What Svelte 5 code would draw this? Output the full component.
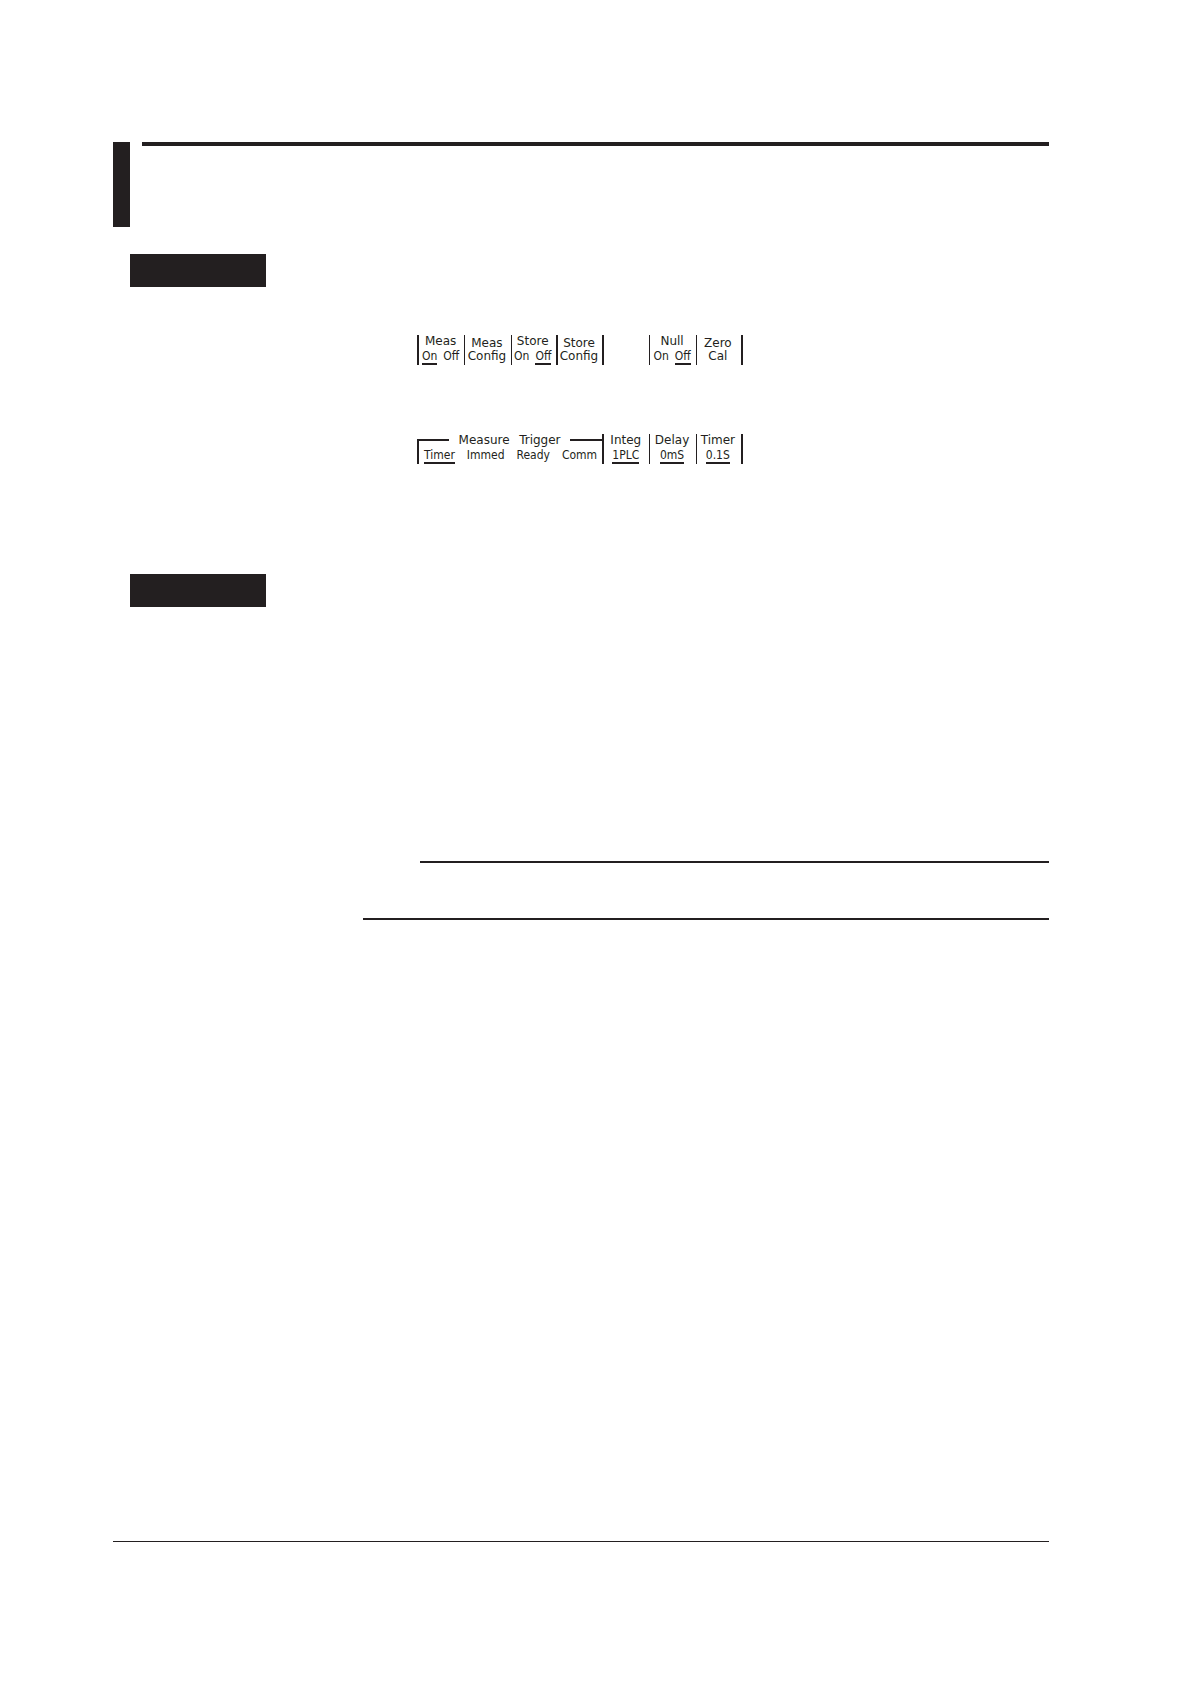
<script lang="ts">
  interface SoftKey {
    label?: string;
    name?: string;
    options?: string[];
    thick?: boolean;
  }

  const mainKeys: SoftKey[] = [
    { label: 'Meas', options: ['On', 'Off'] },
    { label: 'Meas', name: 'Config' },
    { label: 'Store', options: ['On', 'Off'], thick: true },
    { label: 'Store', name: 'Config', thick: true },
    {},
    { label: 'Null', options: ['On', 'Off'] },
    { label: 'Zero', name: 'Cal', thick: true }
  ];

  const valueKeys: SoftKey[] = [
    { label: 'Integ', options: ['1PLC'] },
    { label: 'Delay', options: ['0mS'] },
    { label: 'Timer', options: ['0.1S'], thick: true }
  ];

  const triggers = ['Timer', 'Immed', 'Ready', 'Comm'];

  // Selected option of each key, by position
  let selected = $state([0, 0, 1, 0, 0, 1, 0]);
  let trigger = $state('Timer');

  function toggle(index: number) {
    if (mainKeys[index].options) {
      selected[index] = selected[index] === 0 ? 1 : 0;
    }
  }
</script>

{#snippet keyFace(key: SoftKey, current: number)}
  <span class="label">{key.label}</span>
  <span class="values">
    {#if key.options}
      {#each key.options as option, i}
        <span class="value" class:on={i === current}>{option}</span>
      {/each}
    {:else}
      <span class="value name">{key.name}</span>
    {/if}
  </span>
{/snippet}

<main class="page">
  <header class="chapter">
    <div class="chapter-mark"></div>
    <div class="chapter-rule"></div>
  </header>

  <section class="procedure">
    <div class="tab"></div>
    <div class="menu">
      {#each mainKeys as key, i}
        {#if key.label}
          <button
            type="button"
            class="key"
            class:thick={key.thick}
            class:action={!key.options}
            onclick={() => toggle(i)}
          >
            {@render keyFace(key, selected[i])}
          </button>
        {:else}
          <div class="key"></div>
        {/if}
      {/each}
    </div>

    <div class="menu">
      <div class="trigger" role="group" aria-labelledby="trigger-title">
        <div class="trigger-title" id="trigger-title">
          <span>Measure</span>
          <span>Trigger</span>
        </div>
        <div class="trigger-options">
          {#each triggers as name}
            <button
              type="button"
              class="value"
              class:on={trigger === name}
              onclick={() => (trigger = name)}
            >{name}</button>
          {/each}
        </div>
      </div>
      {#each valueKeys as key}
        <button type="button" class="key" class:thick={key.thick}>
          {@render keyFace(key, 0)}
        </button>
      {/each}
    </div>
  </section>

  <section class="explanation">
    <div class="tab"></div>
    <div class="note"></div>
  </section>

  <footer class="footer"></footer>
</main>

<style>
  :global(body) {
    background: #fff;
  }

  .page {
    box-sizing: border-box;
    padding: 142px 142px 142px 113px;
    color: #231f20;
    font-family: "DejaVu Sans", sans-serif;
    font-size: 12px;
  }

  .chapter {
    display: flex;
    gap: 12px;
  }

  .chapter-mark {
    width: 17px;
    height: 85px;
    background: #231f20;
  }

  .chapter-rule {
    flex: 1;
    height: 4px;
    background: #231f20;
  }

  .tab {
    width: 136px;
    height: 33px;
    margin-left: 17px;
    background: #231f20;
  }

  .procedure {
    margin-top: 27px;
  }

  .menu {
    display: grid;
    grid-template-columns: repeat(7, 1fr);
    box-sizing: border-box;
    width: 326px;
    height: 30px;
    margin-top: 48px;
    margin-left: 304px;
    border-left: 2px solid #231f20;
  }

  .menu + .menu {
    margin-top: 69px;
    border-left: 0;
    padding-left: 2px;
  }

  button {
    margin: 0;
    padding: 0;
    border: 0;
    background: none;
    color: inherit;
    font: inherit;
    cursor: pointer;
  }

  .key {
    display: flex;
    flex-direction: column;
    align-items: center;
    justify-content: space-between;
    min-width: 0;
    padding-right: 2px;
    border-right: 1px solid #231f20;
  }

  .key.thick {
    border-right-width: 2px;
  }

  .key.action {
    justify-content: flex-end;
  }

  .label {
    line-height: 12px;
  }

  .values {
    display: flex;
    gap: 6px;
  }

  .value {
    border-bottom: 2px solid transparent;
    font-family: "DejaVu Sans Condensed", "DejaVu Sans", sans-serif;
    line-height: 14px;
    white-space: nowrap;
  }

  .value.name {
    font-family: "DejaVu Sans", sans-serif;
  }

  .value.on {
    border-bottom-color: #231f20;
  }

  .trigger {
    grid-column: span 4;
    margin-left: -2px;
    border-right: 2px solid #231f20;
  }

  .trigger-title {
    display: flex;
    justify-content: space-between;
    height: 14px;
    line-height: 12px;
  }

  /* Bracket lines on both sides of the title */
  .trigger-title::before,
  .trigger-title::after {
    content: "";
    box-sizing: border-box;
    width: 32px;
    align-self: flex-end;
    height: 9px;
    border-top: 2px solid #231f20;
  }

  .trigger-title::before {
    border-left: 2px solid #231f20;
  }

  .trigger-options {
    display: flex;
    justify-content: space-between;
    padding: 0 5px;
    border-left: 2px solid #231f20;
  }

  .explanation {
    margin-top: 110px;
  }

  .note {
    box-sizing: border-box;
    height: 59px;
    margin-top: 254px;
    margin-left: 250px;
    border-bottom: 2px solid #231f20;
  }

  .note::before {
    content: "";
    display: block;
    height: 2px;
    margin-left: 57px;
    background: #231f20;
  }

  .footer {
    height: 1px;
    margin-top: 621px;
    background: #231f20;
  }
</style>
